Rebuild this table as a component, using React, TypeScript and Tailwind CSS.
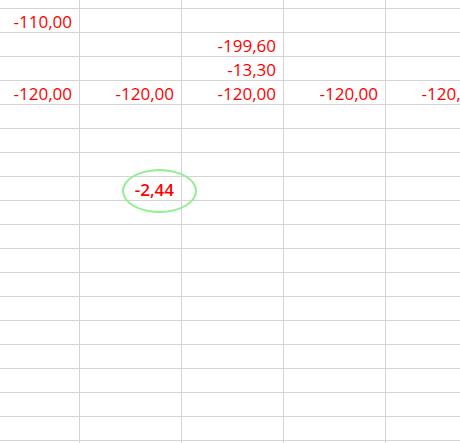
import React from "react";

const widths = ["w-[80px]", "w-[102px]", "w-[102px]", "w-[102px]", "w-[102px]"];

type Cell = { text: string; bold?: boolean };
const data: Record<number, Record<number, Cell>> = {
  0: { 0: { text: "-110,00" } },
  1: { 2: { text: "-199,60" } },
  2: { 2: { text: "-13,30" } },
  3: {
    0: { text: "-120,00" },
    1: { text: "-120,00" },
    2: { text: "-120,00" },
    3: { text: "-120,00" },
    4: { text: "-120,00" },
  },
  7: { 1: { text: "-2,44", bold: true } },
};

export default function App() {
  const rows = Array.from({ length: 19 }, (_, i) => i);
  return (
    <div
      className="relative w-[460px] h-[443px] overflow-hidden bg-white"
      style={{ fontFamily: '"Open Sans", sans-serif' }}
    >
      <div className="flex w-[488px]">
        {widths.map((w, c) => (
          <div key={c} className={`${w} h-[9px] shrink-0 border-r border-b border-[#d4d4d4]`} />
        ))}
      </div>
      {rows.map((r) => (
        <div key={r} className="flex w-[488px]">
          {widths.map((w, c) => {
            const cell = data[r]?.[c];
            return (
              <div
                key={c}
                className={`${w} h-[24px] shrink-0 border-r border-b border-[#d4d4d4] flex items-center justify-end pr-[7px] pt-[2px] text-[17px] leading-none text-[#ff0000] ${
                  cell?.bold ? "font-semibold" : "font-medium"
                }`}
              >
                {cell?.text}
              </div>
            );
          })}
        </div>
      ))}
      <div className="absolute left-[122px] top-[169px] w-[75px] h-[44px] rounded-[50%] border-2 border-[#90ee90]" />
    </div>
  );
}
